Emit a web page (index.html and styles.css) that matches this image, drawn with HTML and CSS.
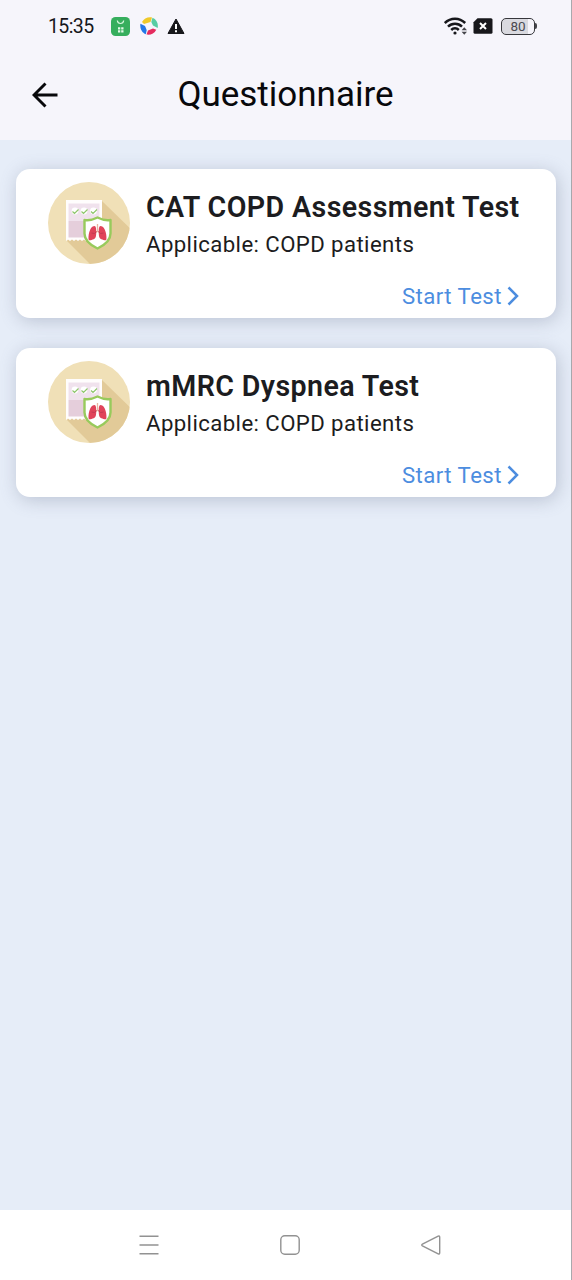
FILE: index.html
```html
<!DOCTYPE html>
<html lang="en">
<head>
<meta charset="utf-8">
<title>Questionnaire</title>
<link rel="stylesheet" href="styles.css">
</head>
<body>
<svg class="defs" width="0" height="0" aria-hidden="true">
  <defs>
    <clipPath id="disc"><circle cx="41" cy="41" r="41"/></clipPath>
    <symbol id="report" viewBox="0 0 82 82">
      <g clip-path="url(#disc)">
        <path fill="#f0e0b7" d="M0 0h82v82H0z"/>
        <path fill="#e2ca98" d="M54 19l40 39v36H54L19 59z"/>
      </g>
      <path fill="#fffdfd" d="M18 18h36v41l-2-1.400-2 1.400-2-1.400-2 1.400-2-1.400-2 1.400-2-1.400-2 1.400-2-1.400-2 1.400-2-1.400-2 1.400-2-1.400-2 1.400-2-1.400-2 1.400-2-1.400-2 1.400z"/>
      <path fill="#f0e2ed" d="M20.500 21.500h31V39h-31z"/>
      <path fill="#e5cedb" d="M20.500 39h31v16.500h-31z"/>
      <g fill="#fff"><circle cx="27" cy="29" r="3.400"/><circle cx="36" cy="29" r="3.400"/><circle cx="45.500" cy="29" r="3.400"/></g>
      <path fill="none" stroke="#8fc66c" stroke-width="1.200" d="M24.500 29.500l2 2 4-4M33.500 29.500l2 2 4-4M43 29.500l2 2 4-4"/>
      <path fill="#fff" stroke="#98ca5c" stroke-width="2.400" stroke-linejoin="round" d="M49.500 35.500q7 3.500 13 2.500v13.500c0 7-5.500 11.500-13 15-7.500-3.500-13-8-13-15V38q6 1 13-2.500z"/>
      <path fill="none" stroke="#e8b4a0" stroke-width="1.300" d="M49.500 42v7l-3 3m3-3l3 3"/>
      <path fill="#e0445a" d="M46.500 44c1.600 0 1.800 3 1.700 6.500 0 3-.2 6-2.500 6.700-2 .6-4.500 1.900-5 .5-.8-2.500.5-13.700 5.800-13.700zM52.500 44c-1.600 0-1.800 3-1.700 6.500 0 3 .2 6 2.500 6.700 2 .6 4.500 1.900 5 .5.800-2.500-.5-13.700-5.800-13.700z"/>
      <path fill="none" stroke="#b93850" stroke-width=".8" d="M43.500 51l3 .5 2-2M55.500 51l-3 .5-2-2"/>
    </symbol>
  </defs>
</svg>
<div class="screen">
  <header class="top">
    <div class="status">
      <span class="clock">15:35</span>
      <svg class="app" width="19" height="19" viewBox="0 0 19 19">
        <rect width="19" height="19" rx="4.500" fill="#36ae5d"/>
        <path d="M6.300 3.500c.5 4 5.900 4 6.400 0" fill="none" stroke="#d9f7df" stroke-width="1.200"/>
        <path d="M7 10.300h2.300v2.200H7zM10.200 10.300h2.300v2.200h-2.300zM7 13.300h2.300v2.300H7zM10.200 13.300h2.300v2.300h-2.300z" fill="#e4f9e8"/>
      </svg>
      <svg class="swirl" width="18" height="18" viewBox="0 0 18 18">
        <path fill="#efc929" d="M2 5C4 1.200 7.500-.2 12 .4L10.500 5 4 7z"/>
        <path fill="#58cda4" d="M12.500.7c4 1.600 6 5.600 5.200 10.300L13 8.500 11.300 5z"/>
        <path fill="#e52b5e" d="M16.300 12.800C14.300 16.800 10.500 18.200 6.500 17.600L8 13.500l5-2z"/>
        <path fill="#2377e7" d="M5.800 17.300C1.800 15.800-.3 11.500.4 6.800L5 9 6.700 13z"/>
      </svg>
      <svg class="alert" width="18" height="17" viewBox="0 0 18 17">
        <path fill="#17171b" stroke="#17171b" stroke-linejoin="round" d="M9 1l8 14.500H1z"/>
        <path fill="#fff" d="M8 6h2v5H8zM8 12.300h2v2H8z"/>
      </svg>
      <svg class="wifi" width="24" height="18" viewBox="0 0 24 18">
        <g fill="none" stroke="#17171b" stroke-width="2.500">
          <path d="M.8 6C6.600.2 15.400.2 21.200 6M4 9.600c4-3.900 10-3.900 14 0M7.200 13c2.200-2.200 5.400-2.200 7.600 0"/>
        </g>
        <circle cx="11" cy="16" r="1.600" fill="#17171b"/>
        <path fill="#45454a" d="M17.600 13.300l2.700-3 2.700 3zM17.600 14.700l2.700 3 2.700-3z"/>
      </svg>
      <svg class="sim" width="20" height="16" viewBox="0 0 20 16">
        <path fill="#17171b" d="M4.500.3H18q1.500 0 1.500 1.500v12.400q0 1.500-1.500 1.500H2q-1.500 0-1.500-1.500V4.300z"/>
        <path stroke="#fff" stroke-width="2" d="M7 5l6 6M13 5l-6 6"/>
      </svg>
      <span class="battery"><span class="level">80</span></span>
    </div>
    <div class="bar">
      <svg class="back" width="26" height="26" viewBox="0 0 26 26">
        <path fill="none" stroke="#08080b" stroke-width="2.900" d="M25.500 13H2.500M13.500 1.500L2 13l11.500 11.500"/>
      </svg>
      <h1 class="title">Questionnaire</h1>
    </div>
  </header>
  <main class="list">
    <section class="card">
      <svg class="badge" width="82" height="82"><use href="#report"/></svg>
      <div class="info">
        <h2 class="name">CAT COPD Assessment Test</h2>
        <p class="note">Applicable: COPD patients</p>
        <a class="start">Start Test<svg width="12" height="20" viewBox="0 0 12 20"><path fill="none" stroke="#4c8ddf" stroke-width="2.500" d="M1.500 1.500L10 10l-8.500 8.500"/></svg></a>
      </div>
    </section>
    <section class="card">
      <svg class="badge" width="82" height="82"><use href="#report"/></svg>
      <div class="info">
        <h2 class="name">mMRC Dyspnea Test</h2>
        <p class="note">Applicable: COPD patients</p>
        <a class="start">Start Test<svg width="12" height="20" viewBox="0 0 12 20"><path fill="none" stroke="#4c8ddf" stroke-width="2.500" d="M1.500 1.500L10 10l-8.500 8.500"/></svg></a>
      </div>
    </section>
  </main>
  <nav class="nav">
    <svg width="20" height="20" viewBox="0 0 20 20"><path stroke="#929292" stroke-width="1.500" d="M.5 1.200h19M.5 10h19M.5 18.800h19"/></svg>
    <svg width="20" height="20" viewBox="0 0 20 20"><rect x=".8" y=".8" width="18.400" height="18.400" rx="4" fill="none" stroke="#929292" stroke-width="1.400"/></svg>
    <svg width="20" height="20" viewBox="0 0 20 20"><path fill="none" stroke="#929292" stroke-width="1.400" stroke-linejoin="round" d="M1.400 9.200L17.200 1.200q1.500-.6 1.500 1v15.600q0 1.600-1.500 1L1.400 10.800q-1.300-.8 0-1.600z"/></svg>
  </nav>
</div>
</body>
</html>
```

FILE: styles.css
```css
* { box-sizing: border-box; }
body { margin: 0; font-family: Roboto, "Liberation Sans", sans-serif; }
svg { display: block; flex: none; }
.defs { position: absolute; }
.screen {
  display: flex;
  flex-direction: column;
  width: 572px;
  height: 1280px;
  border-right: 1px solid #a9a9ad;
  background: #e6edf8;
}
.top { height: 140px; background: #f6f5fb; }
.status {
  display: flex;
  align-items: center;
  height: 52px;
  padding: 0 34px 0 48px;
}
.clock { width: 63px; padding-top: 2px; font-size: 19.500px; line-height: 24px; letter-spacing: -0.6px; color: #17171b; }
.swirl { margin-left: 10px; }
.alert { margin-left: 9px; }
.wifi { margin-left: auto; }
.sim { margin-left: 5px; }
.battery {
  display: flex;
  align-items: center;
  margin-left: 8px;
}
.battery::after { content: ""; width: 2px; height: 6px; background: #45454a; border-radius: 0 2px 2px 0; }
.level {
  width: 34px;
  height: 17px;
  border: 1.5px solid #37373c;
  border-radius: 5px;
  background: linear-gradient(90deg, #d9d9df 80%, #f6f5fb 80%);
  font-size: 13.500px;
  line-height: 15px;
  text-align: center;
  color: #4a4a50;
}
.bar {
  display: grid;
  grid-template-columns: 60px 1fr 60px;
  align-items: center;
  height: 86px;
}
.back { margin-left: 31.500px; }
.title { margin: 0; font-size: 35px; line-height: 42px; font-weight: 400; text-align: center; color: #08080b; }
.list {
  display: flex;
  flex: 1;
  flex-direction: column;
  gap: 30px;
  padding: 29.400px 15px 0 16px;
}
.card {
  display: flex;
  gap: 16px;
  height: 149px;
  padding: 13px 37px 0 32px;
  border-radius: 14px;
  background: #fff;
  box-shadow: 2px 3px 18px rgba(95, 105, 135, 0.32);
}
.info { display: flex; flex: 1; flex-direction: column; min-width: 0; white-space: nowrap; }
.name { margin: 6px 0 0; font-size: 28.600px; line-height: 38px; font-weight: 600; letter-spacing: 0.4px; color: #1c1c20; }
.note { margin: 3px 0 0; font-size: 22.200px; line-height: 30px; letter-spacing: 0.41px; color: #1c1c20; }
.start {
  display: flex;
  align-items: center;
  align-self: flex-end;
  gap: 5px;
  margin-top: 22px;
  font-size: 22.200px;
  line-height: 30px;
  letter-spacing: 0.45px;
  color: #4c8ddf;
}
.nav {
  display: flex;
  align-items: center;
  gap: 121px;
  height: 70px;
  padding-left: 138.500px;
  background: #fff;
}
```
